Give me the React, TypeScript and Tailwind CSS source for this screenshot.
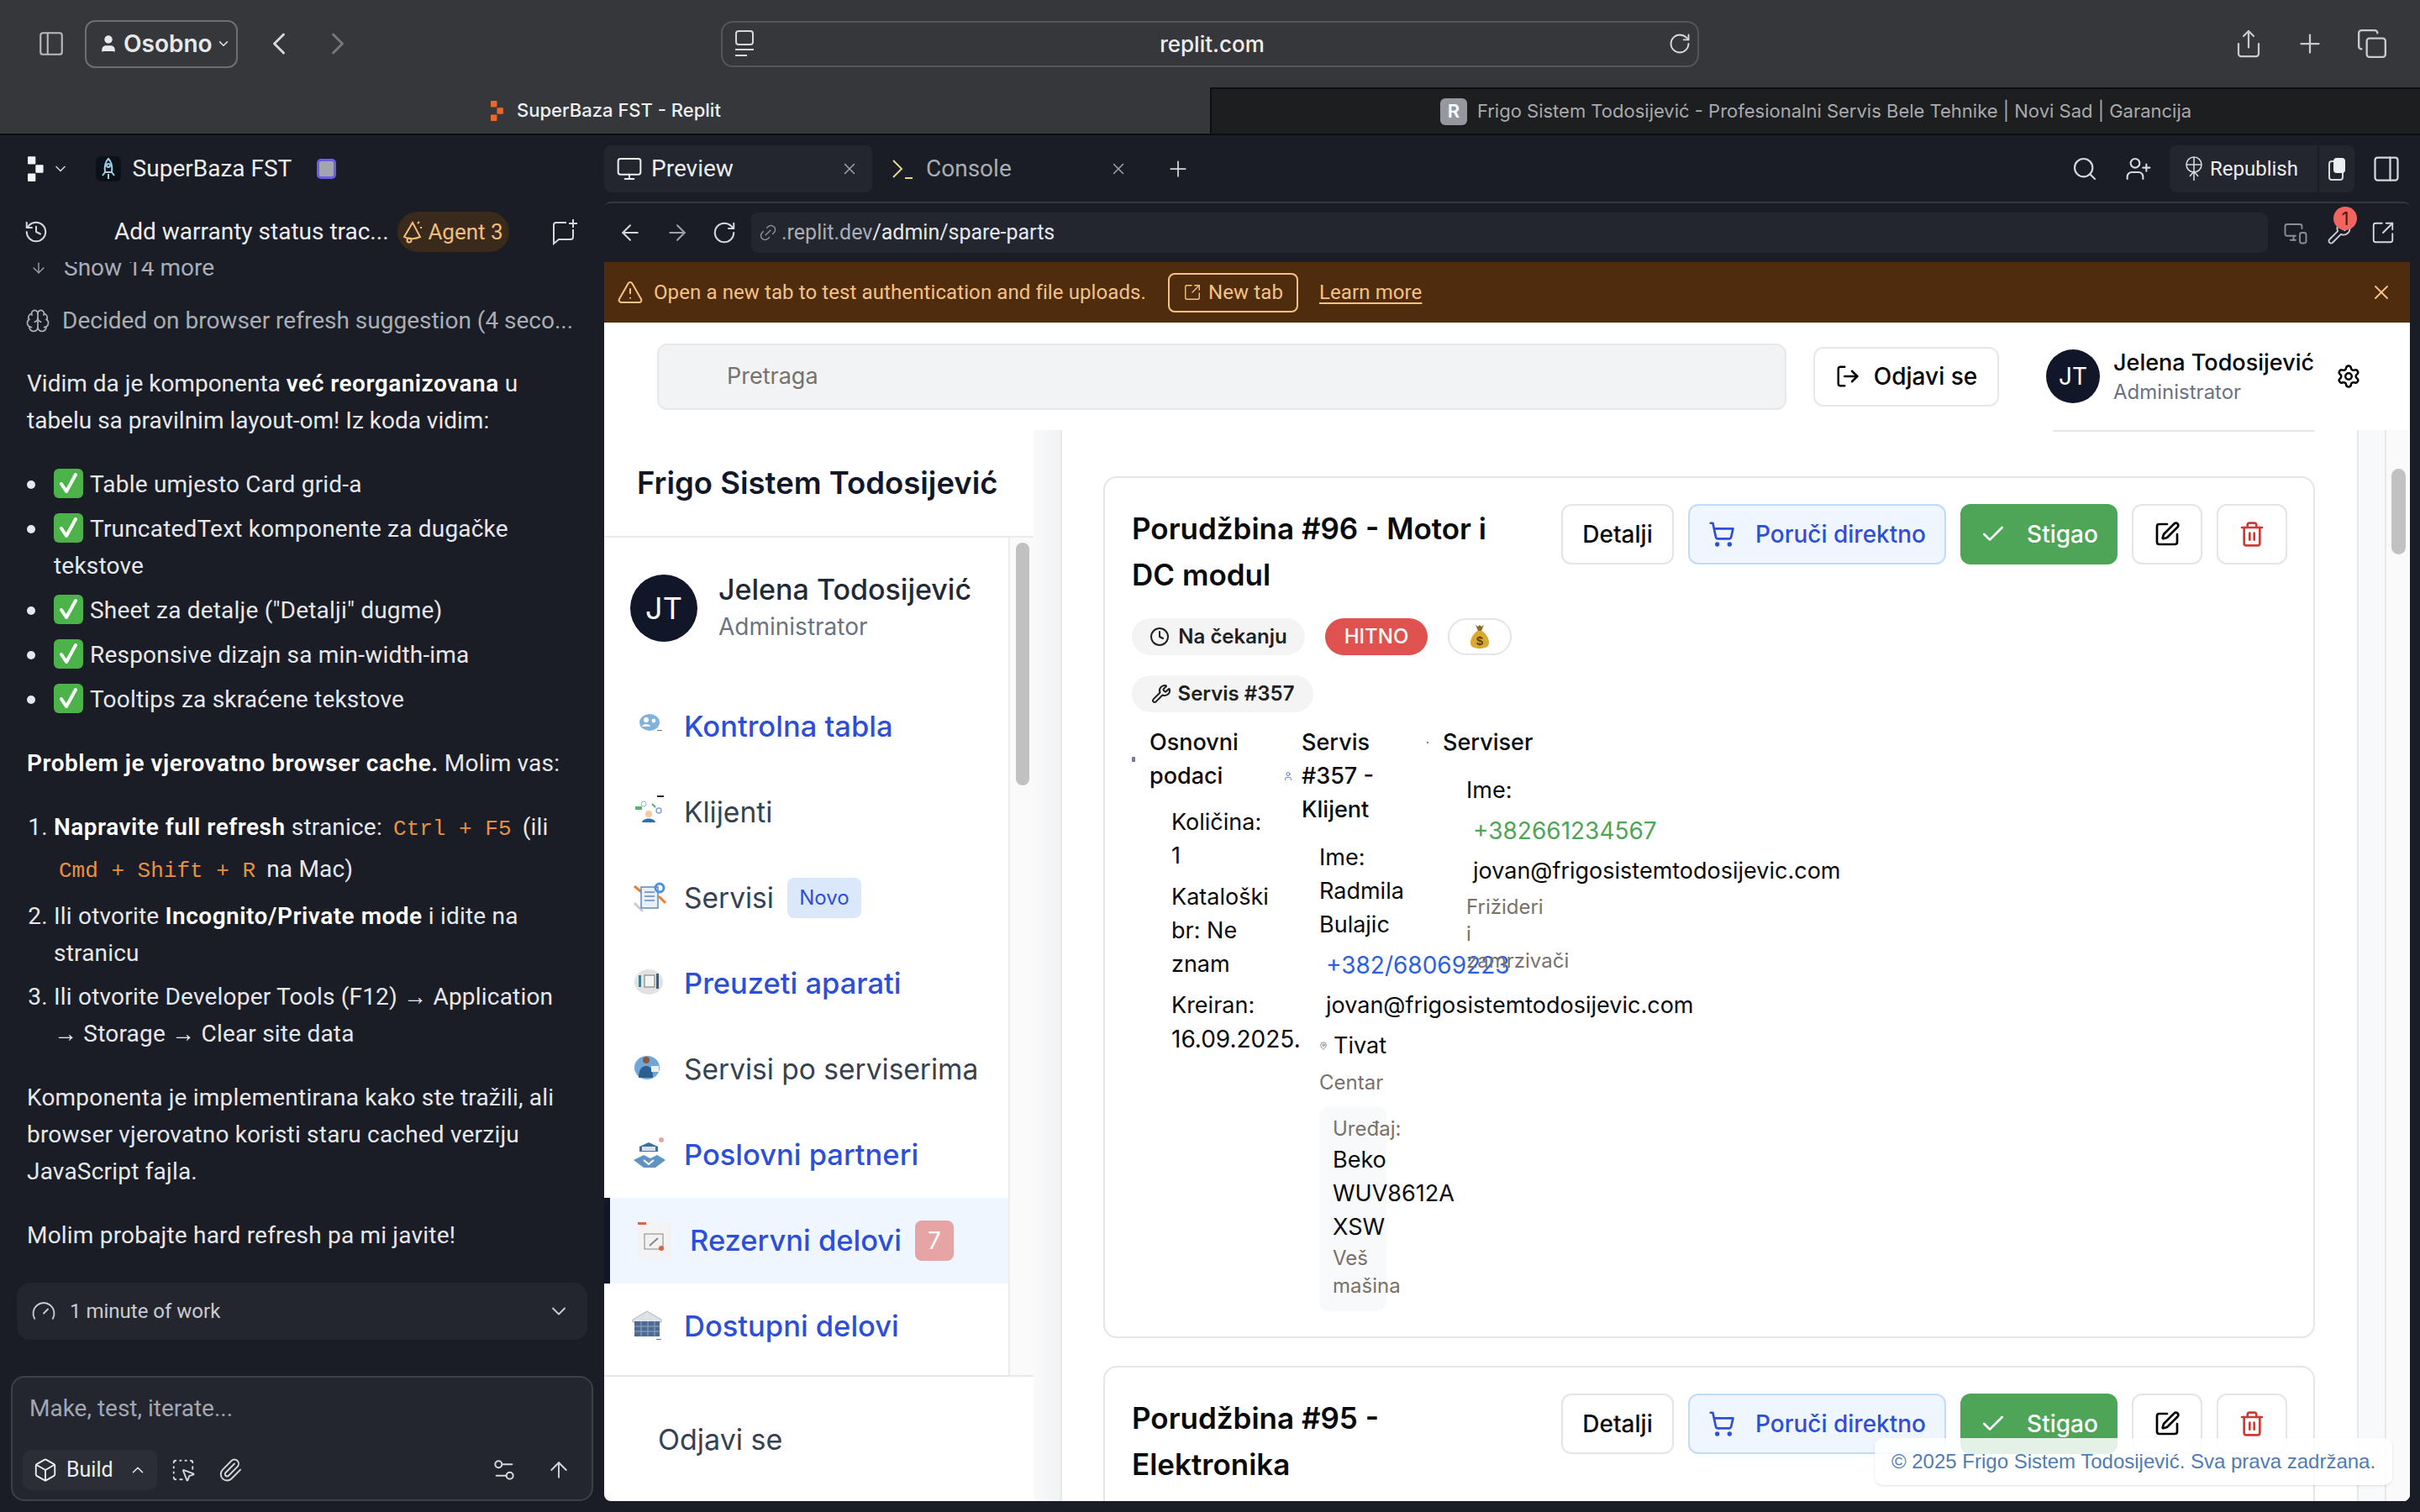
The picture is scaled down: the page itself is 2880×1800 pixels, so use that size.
import {
  ArrowDown,
  ArrowLeft,
  ArrowRight,
  ArrowUp,
  Box,
  Brain,
  Check,
  ChevronDown,
  ChevronLeft,
  ChevronRight,
  ChevronUp,
  Clock,
  Copy,
  Gauge,
  History,
  Link2,
  LogOut,
  MapPin,
  Monitor,
  MonitorSmartphone,
  PanelLeft,
  PanelRight,
  Paperclip,
  Plus,
  RotateCw,
  Search,
  Settings,
  Settings2,
  Share,
  ShoppingCart,
  SquareArrowOutUpRight,
  SquareDashedMousePointer,
  SquarePen,
  Trash2,
  TriangleAlert,
  User,
  UserPlus,
  Wrench,
  X,
} from "lucide-react"
import type { ReactNode } from "react"

function ReplitLogo({ color, size }: { color: string; size: number }) {
  return (
    <svg width={size * 0.62} height={size} viewBox="0 0 20 32" fill={color}>
      <rect x="0" y="0" width="10" height="10" rx="1" />
      <rect x="10" y="11" width="10" height="10" rx="1" />
      <rect x="0" y="22" width="10" height="10" rx="1" />
    </svg>
  )
}

function CheckEmoji() {
  return (
    <svg width="35" height="35" viewBox="0 0 35 35" className="inline-block align-[-7px] mr-[8px]">
      <rect width="35" height="35" rx="6" fill="#4bb34a" />
      <path d="M9 18l6 9 11-20" fill="none" stroke="#fff" strokeWidth="4" strokeLinecap="round" strokeLinejoin="round" />
    </svg>
  )
}

function MoneyBag() {
  return (
    <svg width="24" height="30" viewBox="0 0 24 30">
      <path d="M7 1l3 2 2-2 2 2 3-2-3 7h-4z" fill="#8a6a1f" />
      <path d="M9 8h6c5 4 8 9 8 14 0 5-4 7-11 7S1 27 1 22c0-5 3-10 8-14z" fill="#d9a933" />
      <text x="12" y="25" textAnchor="middle" fontSize="15" fontWeight="700" fill="#5b4510" fontFamily="Liberation Sans">$</text>
    </svg>
  )
}

// small illustrations next to the sidebar links
function NavArt({ kind }: { kind: number }) {
  if (kind === 0)
    return (
      <svg width="48" height="40" viewBox="0 0 48 40">
        <ellipse cx="21" cy="15" rx="12" ry="10" fill="#7fb2dc" />
        <circle cx="17" cy="12" r="3" fill="#fff" />
        <path d="M12 20c1-4 9-4 10 0z" fill="#fff" />
        <circle cx="26" cy="13" r="2.4" fill="#fff" />
        <rect x="30" y="24" width="6" height="1" fill="#777" />
      </svg>
    )
  if (kind === 1)
    return (
      <svg width="48" height="44" viewBox="0 0 48 44">
        <rect x="30" y="2" width="8" height="2" fill="#222" />
        <rect x="4" y="15" width="8" height="4" fill="#57b56b" />
        <circle cx="14" cy="12" r="3" fill="none" stroke="#9ab" strokeWidth="1" />
        <path d="M24 12l4 4" stroke="#4bb36b" strokeWidth="2" />
        <circle cx="20" cy="24" r="4" fill="#f2c9a5" />
        <path d="M12 34c1-6 15-6 16 0z" fill="#2f6ea8" />
        <circle cx="32" cy="20" r="3" fill="none" stroke="#7aa6d8" strokeWidth="1.5" />
      </svg>
    )
  if (kind === 2)
    return (
      <svg width="48" height="40" viewBox="0 0 48 40">
        <path d="M3 6l12 10" stroke="#ef7d32" strokeWidth="3" />
        <path d="M3 26l10 10" stroke="#c8cdd4" strokeWidth="3" />
        <rect x="11" y="7" width="20" height="25" fill="#e8f1fb" stroke="#5b8ac0" strokeWidth="1.5" />
        <path d="M15 13h12M15 18h12M15 23h12" stroke="#5b8ac0" strokeWidth="1.5" />
        <circle cx="33" cy="8" r="5" fill="none" stroke="#4d90e0" strokeWidth="3" />
        <path d="M32 18l8 8" stroke="#ef7d32" strokeWidth="3" />
      </svg>
    )
  if (kind === 3)
    return (
      <svg width="48" height="40" viewBox="0 0 48 40">
        <ellipse cx="20" cy="18" rx="17" ry="15" fill="#e2e2e2" />
        <rect x="8" y="10" width="3" height="14" fill="#3d7f96" />
        <rect x="15" y="10" width="12" height="14" fill="#f4f4f4" stroke="#777" />
        <rect x="29" y="8" width="3" height="18" fill="#2c5f8a" />
      </svg>
    )
  if (kind === 4)
    return (
      <svg width="48" height="40" viewBox="0 0 48 40">
        <ellipse cx="18" cy="18" rx="15" ry="14" fill="#6fa8d8" />
        <circle cx="17" cy="9" r="4" fill="#8a5a3a" />
        <path d="M8 30c0-10 4-14 9-14s8 4 8 14z" fill="#2d5f8e" />
        <rect x="23" y="16" width="9" height="7" fill="#eee" />
      </svg>
    )
  if (kind === 5)
    return (
      <svg width="48" height="44" viewBox="0 0 48 44">
        <path d="M9 12l11-5 11 5v6H9z" fill="#41709c" />
        <rect x="12" y="12" width="16" height="5" fill="#d6e2ee" />
        <path d="M2 28l12-6 8 4 8-4 10 6-12 9h-14z" fill="#5f93c2" />
        <path d="M14 28l6 5 6-5" stroke="#fff" strokeWidth="2" fill="none" />
        <circle cx="35" cy="4" r="3" fill="#e8a3a3" />
      </svg>
    )
  if (kind === 6)
    return (
      <svg width="40" height="44" viewBox="0 0 40 44" className="bg-[#f3f3f3]">
        <rect x="0" y="0" width="10" height="3" fill="#e2613f" />
        <rect x="8" y="14" width="22" height="18" fill="#f1f1f1" stroke="#888" />
        <path d="M14 28l10-9" stroke="#888" strokeWidth="2" />
        <circle cx="28" cy="31" r="3" fill="#e2613f" />
      </svg>
    )
  return (
    <svg width="48" height="40" viewBox="0 0 48 40">
      <path d="M1 12L18 2l17 10v3H1z" fill="#dfe3e8" stroke="#aab2bd" />
      <rect x="3" y="14" width="30" height="18" fill="#4d6a94" />
      <path d="M3 20h30M3 26h30M11 14v18M19 14v18M27 14v18" stroke="#93a8c6" strokeWidth="1" />
      <rect x="29" y="35" width="6" height="1" fill="#777" />
    </svg>
  )
}

const navItems = [
  { label: "Kontrolna tabla", blue: true },
  { label: "Klijenti", blue: false },
  { label: "Servisi", blue: false, tag: "Novo" },
  { label: "Preuzeti aparati", blue: true },
  { label: "Servisi po serviserima", blue: false },
  { label: "Poslovni partneri", blue: true },
  { label: "Rezervni delovi", blue: true, active: true, count: "7" },
  { label: "Dostupni delovi", blue: true },
]

function Bullet({ children }: { children: ReactNode }) {
  return (
    <li className="flex">
      <span className="w-[32px] shrink-0 pt-[17px]">
        <span className="block w-[10px] h-[10px] rounded-full bg-[#e6e8ee]" />
      </span>
      <div>
        <CheckEmoji />
        {children}
      </div>
    </li>
  )
}

function Chat() {
  return (
    <div className="w-[719px] shrink-0 flex flex-col font-['Roboto',sans-serif] text-[#e6e8ee]">
      <div className="h-[79px] flex items-center pl-[33px]">
        <ReplitLogo color="#f2f3f5" size={30} />
        <ChevronDown className="w-[20px] h-[20px] ml-[10px] text-[#c9ccd3]" />
        <div className="ml-[32px] w-[30px] h-[30px] rounded-[7px] bg-[#0b1118] flex items-center justify-center">
          <svg width="18" height="28" viewBox="0 0 18 28" fill="none" stroke="#9fd0e8" strokeWidth="2">
            <path d="M9 2c4 4 5 9 4 16H5C4 11 5 6 9 2z" />
            <circle cx="9" cy="10" r="2" />
            <path d="M5 18l-3 4M13 18l3 4M9 20v6" />
          </svg>
        </div>
        <span className="ml-[14px] text-[28px] text-[#eceef2]">SuperBaza FST</span>
        <span className="ml-[30px] w-[23px] h-[24px] rounded-[5px] bg-[#a3a6ae] border-[3px] border-[#6a5de8]" />
      </div>
      <div className="h-[72px] flex items-center relative z-10 bg-[#1a1d25]">
        <History className="ml-[28px] w-[30px] h-[30px] text-[#d5d7dd]" strokeWidth={1.6} />
        <span className="ml-[78px] text-[28px] text-[#eceef2] whitespace-nowrap">Add warranty status trac...</span>
        <span className="ml-[10px] h-[48px] w-[133px] rounded-[24px] bg-[#3a2a1c] flex items-center justify-center gap-[6px] text-[26px] text-[#f3bd7d]">
          <svg width="24" height="28" viewBox="0 0 24 28" fill="none" stroke="#f3bd7d" strokeWidth="2">
            <path d="M12 3L2 20c5 3 13 3 19 0z" />
            <circle cx="8" cy="24" r="2.5" />
            <path d="M18 4l2-2M21 9h2" />
          </svg>
          Agent 3
        </span>
        <svg className="ml-[50px]" width="32" height="32" viewBox="0 0 32 32" fill="none" stroke="#d5d7dd" strokeWidth="2">
          <path d="M18 5H6a3 3 0 0 0-3 3v22l6-5h14a3 3 0 0 0 3-3v-9" />
          <path d="M26 1v10M21 6h10" />
        </svg>
      </div>
      <div className="flex-1 min-h-0 overflow-hidden flex flex-col px-[32px] text-[28px] leading-[44px] tracking-[0.2px]">
        <div className="-mt-[15px] h-[44px] flex items-center text-[#a9adb7] -mx-[32px] pl-[36px] shrink-0 tracking-normal">
          <ArrowDown className="w-[20px] h-[28px]" strokeWidth={1.5} />
          <span className="ml-[20px]">Show 14 more</span>
        </div>
        <div className="mt-[19px] h-[44px] flex items-center text-[#a9adb7] -mx-[32px] pl-[30px] shrink-0 whitespace-nowrap tracking-normal">
          <Brain className="w-[30px] h-[30px]" strokeWidth={1.4} />
          <span className="ml-[14px]">Decided on browser refresh suggestion (4 seco...</span>
        </div>
        <p className="mt-[31px] tracking-normal">
          Vidim da je komponenta <b className="font-semibold text-white tracking-[0.5px]">već reorganizovana</b> u<br />
          tabelu sa pravilnim layout-om! Iz koda vidim:
        </p>
        <ul className="mt-[32px] flex flex-col gap-[9px]">
          <Bullet>Table umjesto Card grid-a</Bullet>
          <Bullet>TruncatedText komponente za dugačke<br />tekstove</Bullet>
          <Bullet>Sheet za detalje ("Detalji" dugme)</Bullet>
          <Bullet>Responsive dizajn sa min-width-ima</Bullet>
          <Bullet>Tooltips za skraćene tekstove</Bullet>
        </ul>
        <p className="mt-[32px]">
          <b className="font-semibold text-white tracking-[0.5px]">Problem je vjerovatno browser cache.</b> Molim vas:
        </p>
        <ol className="mt-[30px] flex flex-col gap-[8px] list-decimal pl-[32px]">
          <li className="leading-[47px]">
            <b className="font-semibold text-white tracking-[0.5px]">Napravite full refresh</b> stranice:{" "}
            <code className="font-['Liberation_Mono',monospace] text-[26px] text-[#e8923f] tracking-normal px-[6px]">Ctrl + F5</code> (ili<br />
            <code className="font-['Liberation_Mono',monospace] text-[26px] text-[#e8923f] tracking-normal px-[6px]">Cmd + Shift + R</code> na Mac)
          </li>
          <li>
            Ili otvorite <b className="font-semibold text-white tracking-[0.5px]">Incognito/Private mode</b> i idite na<br />stranicu
          </li>
          <li>
            Ili otvorite Developer Tools (F12) → Application<br />→ Storage → Clear site data
          </li>
        </ol>
        <p className="mt-[32px]">
          Komponenta je implementirana kako ste tražili, ali<br />
          browser vjerovatno koristi staru cached verziju<br />
          JavaScript fajla.
        </p>
        <p className="mt-[32px]">Molim probajte hard refresh pa mi javite!</p>
      </div>
      <div className="mx-[20px] mb-[43px] h-[68px] rounded-[16px] bg-[#23262e] flex items-center pl-[17px] pr-[20px] text-[24px] text-[#c9ccd3]">
        <Gauge className="w-[30px] h-[30px]" strokeWidth={1.5} />
        <span className="ml-[16px] flex-1">1 minute of work</span>
        <ChevronDown className="w-[28px] h-[28px]" strokeWidth={1.6} />
      </div>
      <div className="mx-[13px] mb-[13px] h-[149px] rounded-[16px] bg-[#23262e] border-2 border-[#3c4049] flex flex-col">
        <div className="h-[86px] pl-[20px] pt-[16px] text-[28px] text-[#a2a6b0]">Make, test, iterate...</div>
        <div className="flex items-center pl-[12px] pr-[24px] text-[#d5d7dd]">
          <div className="w-[160px] h-[48px] rounded-[10px] bg-[#2b2e36] flex items-center pl-[12px] text-[25px] text-[#eceef2]">
            <Box className="w-[30px] h-[30px]" strokeWidth={1.5} />
            <span className="ml-[10px]">Build</span>
            <ChevronUp className="ml-[18px] w-[22px] h-[22px]" strokeWidth={1.6} />
          </div>
          <SquareDashedMousePointer className="ml-[16px] w-[30px] h-[30px]" strokeWidth={1.5} />
          <Paperclip className="ml-[26px] w-[30px] h-[30px]" strokeWidth={1.5} />
          <span className="flex-1" />
          <Settings2 className="w-[32px] h-[32px]" strokeWidth={1.5} />
          <ArrowUp className="ml-[34px] w-[30px] h-[30px]" strokeWidth={1.5} />
        </div>
      </div>
    </div>
  )
}

function CardHead({ title, lines }: { title: string; lines: string }) {
  return (
    <div className="flex items-start">
      <h3 className="flex-1 pt-[2px] text-[35px] leading-[55px] font-semibold text-[#0a0a0a]">
        {title}<br />{lines}
      </h3>
      <div className="flex gap-[17px] text-[28px] font-medium">
        <button className="w-[134px] h-[72px] rounded-[12px] border-2 border-[#e5e5e5] text-[#0a0a0a] bg-white">Detalji</button>
        <button className="w-[307px] h-[72px] rounded-[12px] border-2 border-[#bfdbfe] bg-[#eff6ff] text-[#2d4fd7] flex items-center justify-center gap-[24px]">
          <ShoppingCart className="w-[32px] h-[32px]" strokeWidth={2} />
          Poruči direktno
        </button>
        <button className="w-[187px] h-[72px] rounded-[12px] bg-[#4ea457] text-white flex items-center justify-center gap-[24px]">
          <Check className="w-[32px] h-[32px]" strokeWidth={2} />
          Stigao
        </button>
        <button className="w-[84px] h-[72px] rounded-[12px] border-2 border-[#e5e5e5] bg-white flex items-center justify-center">
          <SquarePen className="w-[32px] h-[32px] text-black" strokeWidth={2} />
        </button>
        <button className="w-[84px] h-[72px] rounded-[12px] border-2 border-[#e5e5e5] bg-white flex items-center justify-center">
          <Trash2 className="w-[32px] h-[32px] text-[#cf3a34]" strokeWidth={2} />
        </button>
      </div>
    </div>
  )
}

function Preview() {
  return (
    <div className="flex-1 min-h-0 mr-[12px] mb-[13px] rounded-[8px] border-t-2 border-[#33363f] overflow-hidden flex flex-col font-['Roboto',sans-serif]">
      <div className="h-[70px] shrink-0 flex items-center text-[#d5d7dd] bg-[#1a1d25]">
        <ArrowLeft className="ml-[16px] w-[30px] h-[30px]" strokeWidth={1.6} />
        <ArrowRight className="ml-[26px] w-[30px] h-[30px] text-[#9ea2ab]" strokeWidth={1.6} />
        <RotateCw className="ml-[26px] w-[30px] h-[30px]" strokeWidth={1.6} />
        <div className="ml-[17px] w-[1805px] h-[48px] rounded-[8px] bg-[#23262e] flex items-center pl-[8px] text-[25px]">
          <Link2 className="w-[24px] h-[24px] text-[#8a8e98] -rotate-45" strokeWidth={1.5} />
          <span className="ml-[4px] text-[#a9adb7]">.replit.dev</span>
          <span className="text-[#e6e8ee]">/admin/spare-parts</span>
        </div>
        <MonitorSmartphone className="ml-[18px] w-[30px] h-[30px] text-[#8a8e98]" strokeWidth={1.5} />
        <div className="ml-[22px] relative">
          <Wrench className="w-[30px] h-[30px] text-[#c9ccd3]" strokeWidth={1.5} />
          <span className="absolute -top-[16px] left-[8px] w-[28px] h-[28px] rounded-full bg-[#f0655f] text-[#5b0f0c] text-[22px] leading-[28px] text-center font-['Inter',sans-serif]">1</span>
        </div>
        <SquareArrowOutUpRight className="ml-[22px] w-[30px] h-[30px]" strokeWidth={1.5} />
      </div>
      <div className="h-[72px] shrink-0 bg-[#4f2c0d] flex items-center text-[#f5c283] text-[24px] tracking-[0.1px]">
        <TriangleAlert className="ml-[15px] w-[32px] h-[32px]" strokeWidth={1.5} />
        <span className="ml-[12px] whitespace-nowrap">Open a new tab to test authentication and file uploads.</span>
        <span className="ml-[26px] w-[155px] h-[47px] rounded-[8px] border-2 border-[#f5c283] flex items-center justify-center gap-[8px]">
          <SquareArrowOutUpRight className="w-[22px] h-[22px]" strokeWidth={1.5} />
          New tab
        </span>
        <span className="ml-[25px] underline underline-offset-4">Learn more</span>
        <span className="flex-1" />
        <X className="mr-[20px] w-[28px] h-[28px]" strokeWidth={1.6} />
      </div>
      <div className="flex-1 min-h-0 bg-white flex flex-col font-['Inter',sans-serif] relative">
        <div className="h-[128px] shrink-0 flex items-center pl-[63px]">
          <div className="w-[1344px] h-[79px] rounded-[12px] border-2 border-[#e8e8e8] bg-[#f2f3f5] flex items-center pl-[81px] text-[27px] text-[#78716c]">Pretraga</div>
          <button className="ml-[32px] w-[221px] h-[71px] rounded-[12px] border-2 border-[#e8e8e8] flex items-center justify-center gap-[16px] text-[28px] font-medium text-black">
            <LogOut className="w-[30px] h-[30px]" strokeWidth={2} />
            Odjavi se
          </button>
          <div className="ml-[56px] w-[64px] h-[64px] rounded-full bg-[#111729] text-white text-[28px] flex items-center justify-center">JT</div>
          <div className="ml-[16px] flex flex-col">
            <span className="text-[27px] leading-[36px] font-medium text-black whitespace-nowrap">Jelena Todosijević</span>
            <span className="text-[24px] leading-[33px] text-[#6b7280]">Administrator</span>
          </div>
          <Settings className="ml-[26px] w-[30px] h-[30px] text-black" strokeWidth={2} />
        </div>
        <div className="flex-1 min-h-0 flex">
          <aside className="w-[511px] shrink-0 flex flex-col">
            <div className="h-[128px] shrink-0 flex items-center pl-[39px] text-[36.5px] font-semibold text-[#111729] border-b-2 border-[#ececec] whitespace-nowrap">Frigo Sistem Todosijević</div>
            <div className="flex-1 min-h-0 flex">
              <div className="w-[481px] shrink-0 flex flex-col">
                <div className="flex items-center pt-[40px] pl-[31px]">
                  <div className="w-[80px] h-[80px] rounded-full bg-[#111729] text-white text-[36px] flex items-center justify-center">JT</div>
                  <div className="ml-[25px] flex flex-col">
                    <span className="text-[34px] leading-[44px] font-medium text-[#1f2937] whitespace-nowrap">Jelena Todosijević</span>
                    <span className="text-[28px] leading-[44px] text-[#6b7280]">Administrator</span>
                  </div>
                </div>
                <nav className="mt-[46px] flex flex-col">
                  {navItems.map((item, i) => (
                    <div
                      key={item.label}
                      className={item.active ? "h-[102px] shrink-0 flex items-center bg-[#eff6ff] border-l-[7px] border-[#111729] pl-[33px]" : "h-[102px] shrink-0 flex items-center pl-[33px]"}
                    >
                      <span className="w-[52px] shrink-0 flex"><NavArt kind={i} /></span>
                      <span className={item.blue ? "ml-[10px] text-[34.5px] font-medium text-[#2d4fd7] whitespace-nowrap" : "ml-[10px] text-[33.5px] text-[#374151] whitespace-nowrap"}>{item.label}</span>
                      {item.tag && <span className="ml-[16px] w-[88px] h-[48px] rounded-[8px] bg-[#dbe8fb] text-[#2d4fd7] text-[24px] flex items-center justify-center">{item.tag}</span>}
                      {item.count && <span className="ml-[16px] w-[46px] h-[48px] rounded-[8px] bg-[#e6a4a4] text-white text-[28px] flex items-center justify-center">{item.count}</span>}
                    </div>
                  ))}
                </nav>
              </div>
              <div className="flex-1 border-l-2 border-[#ececec] bg-[#fafafa] pl-[7px] pt-[6px]">
                <div className="w-[16px] h-[289px] rounded-full bg-[#c1c1c1]" />
              </div>
            </div>
            <div className="h-[150px] shrink-0 border-t-2 border-[#e8e8ec] flex items-center pl-[64px] text-[34px] text-[#374151]">Odjavi se</div>
          </aside>
          <div className="w-[34px] shrink-0 bg-gradient-to-r from-[#f9fafb] to-[#f1f2f4] border-r-2 border-[#e8e8e8]" />
          <main className="w-[1541px] shrink-0 pl-[49px] pr-[50px] overflow-hidden">
            <div className="h-[2px] flex justify-end">
              <div className="w-[312px] border-b-2 border-[#e5e5e5] rounded-b-[8px]" />
            </div>
            <section className="mt-[53px] h-[1026px] rounded-[16px] border-2 border-[#e5e5e5] pt-[31px] pl-[32px] pr-[31px] overflow-visible">
              <CardHead title="Porudžbina #96 - Motor i" lines="DC modul" />
              <div className="mt-[24px] flex gap-[24px] text-[24px] font-semibold text-[#1f1f1f]">
                <span className="h-[44px] w-[206px] rounded-full bg-[#f4f4f5] flex items-center justify-center gap-[10px]">
                  <Clock className="w-[24px] h-[24px]" strokeWidth={2} />
                  Na čekanju
                </span>
                <span className="h-[44px] w-[122px] rounded-full bg-[#e0524f] text-white font-medium flex items-center justify-center">HITNO</span>
                <span className="h-[44px] w-[76px] rounded-full border-2 border-[#e5e5e5] flex items-center justify-center"><MoneyBag /></span>
              </div>
              <div className="mt-[24px] h-[44px] w-[216px] rounded-full bg-[#f4f4f5] flex items-center justify-center gap-[8px] text-[24px] font-semibold text-[#1f1f1f]">
                <Wrench className="w-[24px] h-[24px]" strokeWidth={2} />
                Servis #357
              </div>
              <div className="mt-[16px] flex text-[27px] leading-[40px] text-[#0a0a0a]">
                <div className="w-[180px] shrink-0">
                  <div className="flex items-center">
                    <span className="w-[4px] h-[6px] mr-[17px] bg-[#6f8296]" />
                    <span className="font-medium">Osnovni<br />podaci</span>
                  </div>
                  <div className="pl-[47px] whitespace-nowrap flex flex-col gap-[9px] mt-[15px]">
                    <div>Količina:<br />1</div>
                    <div>Kataloški<br />br: Ne<br />znam</div>
                    <div>Kreiran:<br /><span className="text-[28px]">16.09.2025.</span></div>
                  </div>
                </div>
                <div className="w-[171px] shrink-0">
                  <div className="flex items-center">
                    <User className="w-[12px] h-[14px] mr-[10px] text-[#2d4fd7]" strokeWidth={1.5} />
                    <span className="font-medium">Servis<br />#357 -<br />Klijent</span>
                  </div>
                  <div className="pl-[43px] mt-[17px] whitespace-nowrap">
                    <div>Ime:<br />Radmila<br />Bulajic</div>
                    <div className="mt-[8px] pl-[8px] text-[28px] text-[#2d5fe0]">+382/68069223</div>
                    <div className="mt-[8px] pl-[8px]">jovan@frigosistemtodosijevic.com</div>
                    <div className="mt-[8px] flex items-center">
                      <MapPin className="w-[10px] h-[12px] mr-[7px] text-[#777]" strokeWidth={2} />
                      Tivat
                    </div>
                    <div className="mt-[4px] text-[24px] text-[#78716c]">Centar</div>
                    <div className="mt-[8px] w-[80px] h-[244px] rounded-[12px] bg-[#f8f9fb] pl-[16px] pt-[10px]">
                      <div className="text-[24px] leading-[34px] text-[#78716c]">Uređaj:</div>
                      <div>Beko<br />WUV8612A<br />XSW</div>
                      <div className="text-[24px] leading-[33px] text-[#78716c]">Veš<br />mašina</div>
                    </div>
                  </div>
                </div>
                <div>
                  <div className="flex items-center">
                    <span className="w-[2px] h-[2px] mr-[17px] bg-[#4ea457]" />
                    <span className="font-medium">Serviser</span>
                  </div>
                  <div className="pl-[47px] mt-[17px] whitespace-nowrap">
                    <div>Ime:</div>
                    <div className="mt-[8px] pl-[8px] text-[28px] text-[#4ea457]">+382661234567</div>
                    <div className="mt-[8px] pl-[8px]">jovan@frigosistemtodosijevic.com</div>
                    <div className="mt-[7px] text-[24px] leading-[32px] text-[#78716c]">Frižideri<br />i<br />zamrzivači</div>
                  </div>
                </div>
              </div>
            </section>
            <section className="mt-[33px] h-[400px] rounded-[16px] border-2 border-[#e5e5e5] pt-[31px] pl-[32px] pr-[31px]">
              <CardHead title="Porudžbina #95 -" lines="Elektronika" />
            </section>
          </main>
          <div className="flex-1 bg-[#f8f9fa] border-l-2 border-[#e8e8e8] flex">
            <div className="w-[33px] border-r-2 border-[#e8e8e8]" />
            <div className="flex-1 pl-[6px] pt-[46px] bg-[#fafafa]">
              <div className="w-[17px] h-[102px] rounded-full bg-[#c1c1c1]" />
            </div>
          </div>
        </div>
        <div className="absolute right-[21px] bottom-[19px] w-[616px] h-[56px] rounded-[10px] bg-white/85 shadow-sm flex items-center justify-center font-['Liberation_Sans',sans-serif] text-[24px] text-[#4f7cb3] whitespace-nowrap">
          © 2025 Frigo Sistem Todosijević. Sva prava zadržana.
        </div>
      </div>
    </div>
  )
}

export default function App() {
  return (
    <div className="w-[2880px] h-[1800px] overflow-hidden flex flex-col bg-[#1a1d25] font-['Inter',sans-serif]">
      <div className="h-[104px] shrink-0 bg-[#36373b] grid grid-cols-[858px_1164px_1fr] items-center text-[#c9cacd]">
        <div className="flex items-center">
          <PanelLeft className="ml-[42px] w-[38px] h-[34px] text-[#b9babd]" strokeWidth={1.5} />
          <div className="ml-[21px] w-[182px] h-[57px] rounded-[12px] border-2 border-[#6d6e72] flex items-center pl-[14px] text-[28px] font-semibold text-[#e8e9eb]">
            <User className="w-[24px] h-[26px] fill-[#e8e9eb]" strokeWidth={1.5} />
            <span className="ml-[6px]">Osobno</span>
            <ChevronDown className="ml-[4px] w-[18px] h-[18px]" strokeWidth={2} />
          </div>
          <ChevronLeft className="ml-[27px] w-[44px] h-[44px] text-[#d7d8da]" strokeWidth={1.6} />
          <ChevronRight className="ml-[26px] w-[44px] h-[44px] text-[#77787c]" strokeWidth={1.6} />
        </div>
        <div className="h-[55px] rounded-[14px] border-2 border-[#55565a] flex items-center pl-[12px] pr-[7px] text-[26px] font-medium text-[#eeeff1]">
          <svg width="28" height="32" viewBox="0 0 28 32" fill="none" stroke="#d7d8da" strokeWidth="2">
            <rect x="4" y="1" width="20" height="16" rx="3" />
            <path d="M3 23h22M3 30h14" />
          </svg>
          <span className="flex-1 text-center">replit.com</span>
          <RotateCw className="w-[28px] h-[28px] text-[#d7d8da]" strokeWidth={1.6} />
        </div>
        <div className="flex items-center justify-end pr-[38px]">
          <Share className="w-[36px] h-[36px]" strokeWidth={1.5} />
          <Plus className="ml-[37px] w-[36px] h-[36px]" strokeWidth={1.5} />
          <Copy className="ml-[37px] w-[38px] h-[38px]" strokeWidth={1.5} />
        </div>
      </div>
      <div className="h-[57px] shrink-0 grid grid-cols-[1440px_1fr] border-b-2 border-[#0e0e10] text-[22px]">
        <div className="bg-[#36373b] flex items-center justify-center pl-[2px] text-[#eeeff1] gap-[16px] font-medium">
          <ReplitLogo color="#e8692b" size={24} />
          SuperBaza FST - Replit
        </div>
        <div className="bg-[#1d1e20] border-t-2 border-l-2 border-[#0e0e10] flex items-center justify-center text-[#a9aaad] gap-[12px]">
          <span className="w-[32px] h-[32px] rounded-[6px] bg-[#96979f] text-white text-[22px] font-semibold flex items-center justify-center">R</span>
          Frigo Sistem Todosijević - Profesionalni Servis Bele Tehnike | Novi Sad | Garancija
        </div>
      </div>
      <div className="flex-1 min-h-0 flex">
        <Chat />
        <div className="flex-1 min-w-0 flex flex-col">
          <div className="h-[79px] shrink-0 flex items-center font-['Roboto',sans-serif] text-[28px] text-[#d5d7dd]">
            <div className="w-[319px] h-[56px] rounded-[8px] bg-[#23262e] flex items-center pl-[14px] text-[#eceef2]">
              <Monitor className="w-[32px] h-[32px]" strokeWidth={1.5} />
              <span className="ml-[10px] flex-1">Preview</span>
              <X className="mr-[16px] w-[22px] h-[22px] text-[#9ea2ab]" strokeWidth={1.6} />
            </div>
            <div className="w-[320px] flex items-center pl-[22px] text-[#a9adb7]">
              <svg width="28" height="28" viewBox="0 0 28 28" fill="none" strokeWidth="2">
                <path d="M3 4l10 10L3 24" stroke="#e8d48a" />
                <path d="M17 25h9" stroke="#e8d48a" />
              </svg>
              <span className="ml-[14px] flex-1">Console</span>
              <X className="mr-[16px] w-[22px] h-[22px] text-[#9ea2ab]" strokeWidth={1.6} />
            </div>
            <Plus className="ml-[29px] w-[30px] h-[30px]" strokeWidth={1.4} />
            <span className="flex-1" />
            <Search className="w-[32px] h-[32px]" strokeWidth={1.6} />
            <UserPlus className="ml-[32px] w-[32px] h-[32px]" strokeWidth={1.6} />
            <div className="ml-[21px] w-[220px] h-[56px] rounded-[8px] bg-[#23262e] flex items-center text-[24px] text-[#eceef2]">
              <svg className="ml-[18px]" width="22" height="30" viewBox="0 0 22 30" fill="none" stroke="#d5d7dd" strokeWidth="1.6">
                <circle cx="11" cy="10" r="9" />
                <path d="M2 10h18M11 1v28M6 24l5-6 5 6" />
              </svg>
              <span className="ml-[8px] flex-1">Republish</span>
              <span className="w-[44px] h-[56px] border-l-2 border-[#1a1d25] flex items-center justify-center relative">
                <span className="w-[18px] h-[24px] mt-[4px] mr-[2px] rounded-[4px] border-2 border-[#d5d7dd]" />
                <span className="absolute right-[11px] top-[15px] w-[14px] h-[18px] rounded-[4px] bg-[#eceef2]" />
              </span>
            </div>
            <PanelRight className="ml-[20px] mr-[22px] w-[36px] h-[36px]" strokeWidth={1.5} />
          </div>
          <Preview />
        </div>
      </div>
    </div>
  )
}
